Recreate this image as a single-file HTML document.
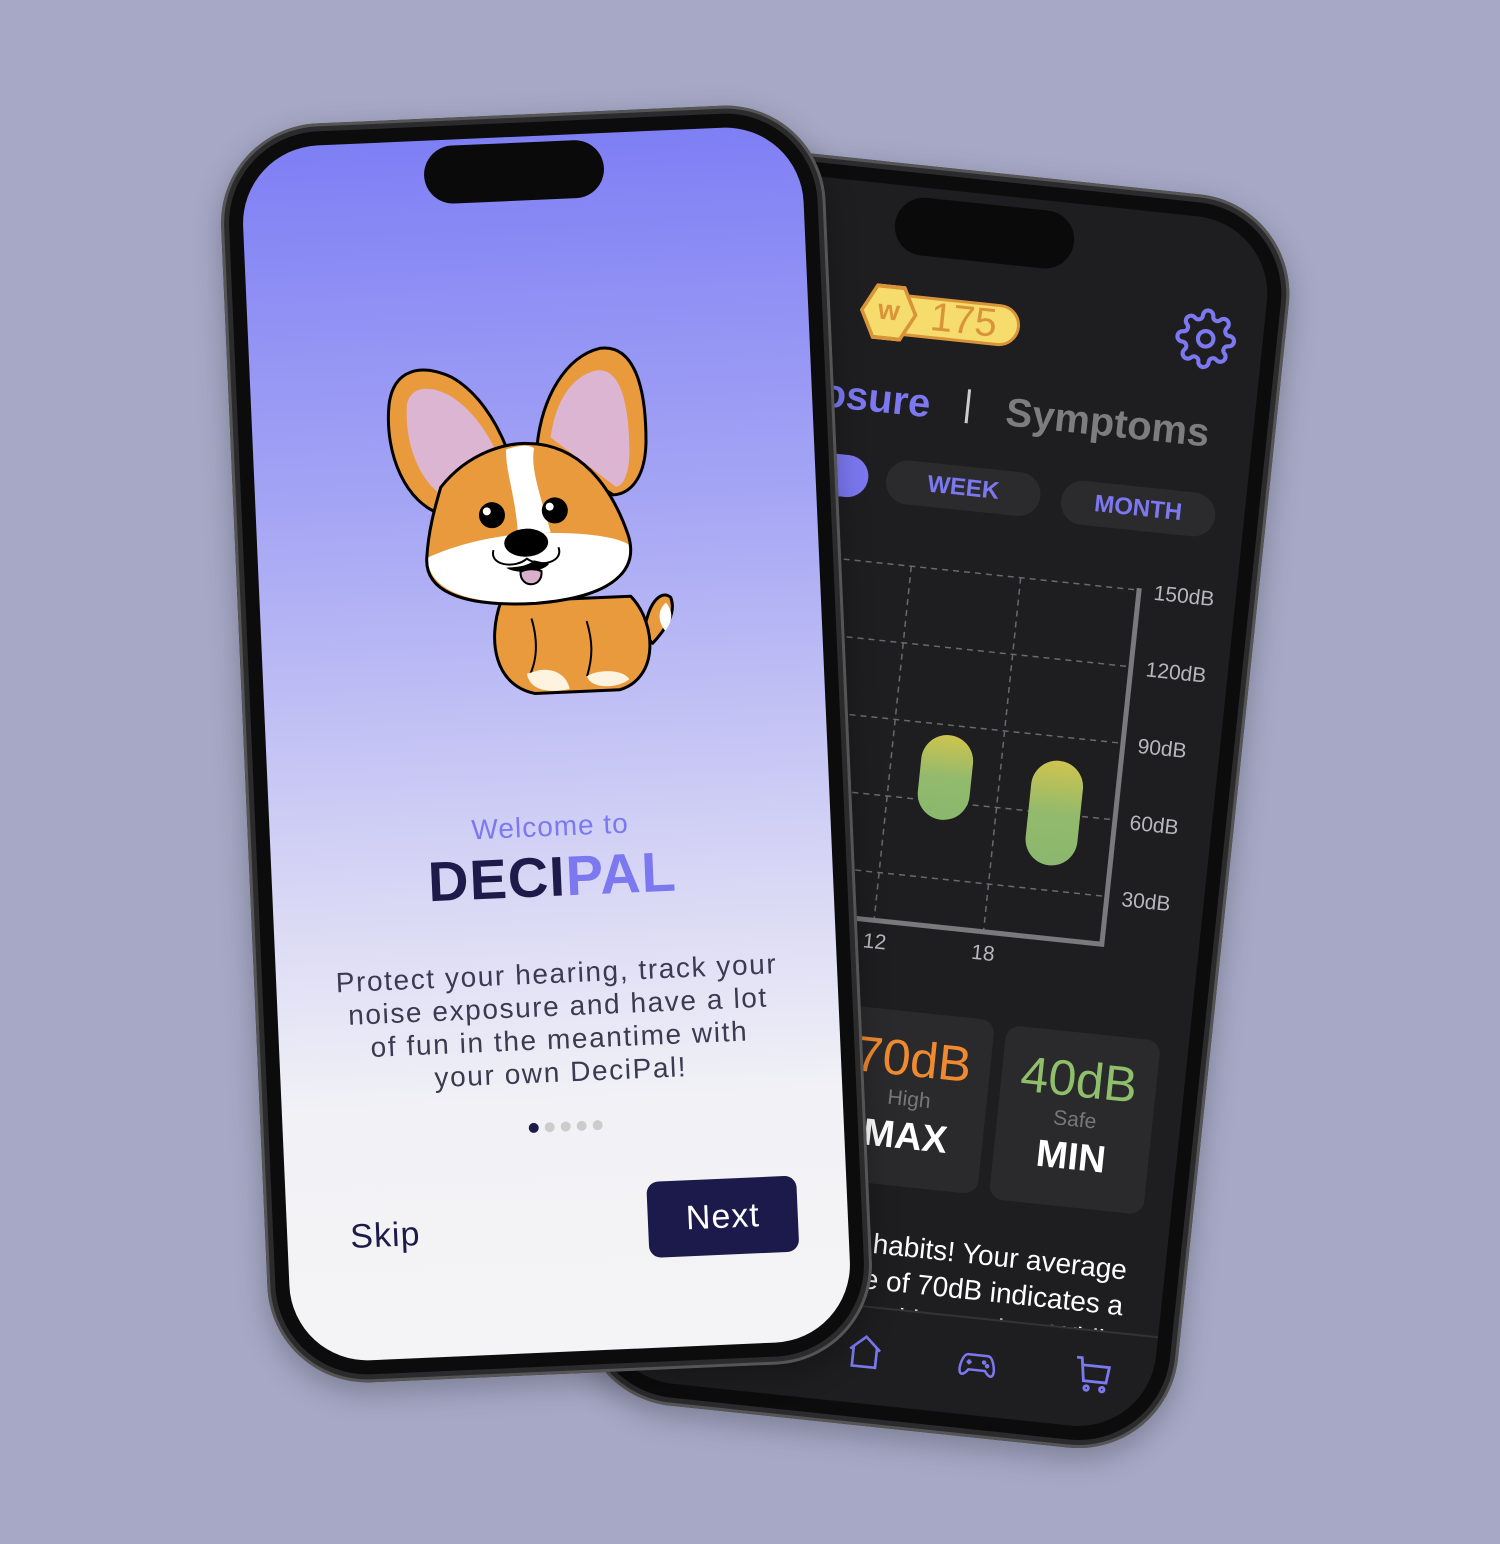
<!DOCTYPE html>
<html><head><meta charset="utf-8"><style>
*{margin:0;padding:0;box-sizing:border-box}
body{width:1500px;height:1544px;background:#a6a8c6;position:relative;overflow:hidden;font-family:"Liberation Sans",sans-serif}
.phone{position:absolute;width:600px;height:1260px;border-radius:100px;background:#2b2b2d;box-shadow:0 0 0 3px #555 inset,0 10px 30px rgba(0,0,0,.25)}
.bezel{position:absolute;left:8px;top:8px;right:8px;bottom:8px;border-radius:92px;background:#0c0c0c}
.screen{position:absolute;left:22px;top:22px;right:22px;bottom:22px;border-radius:78px;overflow:hidden}
.island{position:absolute;width:180px;height:58px;border-radius:29px;background:#0a0a0a}
.abs{position:absolute}
</style></head><body>

<!-- back phone -->
<div class="phone" style="left:635px;top:170px;transform:rotate(6deg)">
 <div class="bezel"></div>
 <div class="screen" style="background:#1e1d1f">
  <div style="position:absolute;left:-22px;top:-22px;width:600px;height:1260px">
   <div class="island" style="left:200px;top:32px"></div>
   <div class="abs" style="left:200px;top:130px;width:135px;height:42px;border-radius:21px;background:#f6dc6c;border:3px solid #d9943a"></div>
   <div class="abs" style="left:174px;top:122px;width:58px;height:56px;background:#d9943a;clip-path:polygon(25% 0,75% 0,100% 50%,75% 100%,25% 100%,0 50%)"></div>
   <div class="abs" style="left:178px;top:126px;width:50px;height:48px;background:#f6dc6c;clip-path:polygon(25% 0,75% 0,100% 50%,75% 100%,25% 100%,0 50%);color:#d9943a;font-weight:bold;font-size:28px;text-align:center;line-height:44px">w</div>
   <div class="abs" style="left:245px;top:128px;font-size:40px;color:#d9943a">175</div>
   <svg class="abs" style="left:490px;top:112px" width="62" height="62" viewBox="0 0 24 24" fill="none" stroke="#7b78f0" stroke-width="1.6"><circle cx="12" cy="12" r="3"/><path d="M19.4 15a1.65 1.65 0 0 0 .33 1.820l.06.06a2 2 0 1 1-2.830 2.830l-.06-.06a1.65 1.65 0 0 0-1.820-.33 1.650 1.650 0 0 0-1 1.510V21a2 2 0 1 1-4 0v-.09A1.65 1.65 0 0 0 9 19.4a1.65 1.65 0 0 0-1.820.33l-.06.06a2 2 0 1 1-2.830-2.830l.06-.06A1.65 1.65 0 0 0 4.68 15a1.65 1.65 0 0 0-1.510-1H3a2 2 0 1 1 0-4h.09A1.65 1.65 0 0 0 4.6 9a1.65 1.65 0 0 0-.33-1.820l-.06-.06a2 2 0 1 1 2.830-2.830l.06.06A1.65 1.65 0 0 0 9 4.68a1.65 1.65 0 0 0 1-1.510V3a2 2 0 1 1 4 0v.09a1.65 1.65 0 0 0 1 1.510 1.65 1.65 0 0 0 1.820-.33l.06-.06a2 2 0 1 1 2.830 2.830l-.06.06A1.65 1.65 0 0 0 19.4 9a1.65 1.65 0 0 0 1.510 1H21a2 2 0 1 1 0 4h-.09a1.65 1.65 0 0 0-1.510 1z"/></svg>
   <div class="abs" style="right:346px;top:215px;font-size:40px;font-weight:bold;color:#7b78f0">Exposure</div>
   <div class="abs" style="left:290px;top:218px;width:3px;height:34px;background:#ccc"></div>
   <div class="abs" style="left:330px;top:215px;font-size:40px;font-weight:bold;color:#7d7d80">Symptoms</div>
   <div class="abs" style="left:60px;top:296px;width:140px;height:42px;border-radius:21px;background:#7b78f0"></div>
   <div class="abs" style="left:218px;top:295px;width:155px;height:44px;border-radius:22px;background:#2b2b2d;color:#7b78f0;font-weight:bold;font-size:24px;text-align:center;line-height:44px">WEEK</div>
   <div class="abs" style="left:394px;top:297px;width:155px;height:44px;border-radius:22px;background:#2b2b2d;color:#7b78f0;font-weight:bold;font-size:24px;text-align:center;line-height:44px">MONTH</div>
   <svg class="abs" style="left:0;top:380px" width="600" height="420">
    <g stroke="#6a6a6e" stroke-width="1.5" stroke-dasharray="6 5" fill="none">
     <line x1="30" y1="20" x2="481" y2="20"/><line x1="30" y1="97" x2="481" y2="97"/><line x1="30" y1="174" x2="481" y2="174"/><line x1="30" y1="251" x2="481" y2="251"/><line x1="30" y1="328" x2="481" y2="328"/>
     <line x1="142" y1="20" x2="142" y2="376"/><line x1="252" y1="20" x2="252" y2="376"/><line x1="362" y1="20" x2="362" y2="376"/>
    </g>
    <path d="M481 18 V376 H30" stroke="#7a7a7e" stroke-width="5" fill="none"/>
    <defs><linearGradient id="g" x1="0" y1="0" x2="0" y2="1"><stop offset="0" stop-color="#cfc44e"/><stop offset=".5" stop-color="#93ba6c"/><stop offset="1" stop-color="#8ab86e"/></linearGradient></defs>
    <rect x="282" y="184" width="52" height="85" rx="26" fill="url(#g)"/>
    <rect x="394" y="198" width="52" height="105" rx="26" fill="url(#g)"/>
    <g fill="#b8b8bc" font-size="21" font-family="Liberation Sans">
     <text x="496" y="28">150dB</text><text x="496" y="105">120dB</text><text x="496" y="182">90dB</text><text x="496" y="259">60dB</text><text x="496" y="336">30dB</text>
     <text x="243" y="404">12</text><text x="352" y="404">18</text>
    </g>
   </svg>
   <div class="abs" style="left:228px;top:843px;width:155px;height:175px;border-radius:14px;background:#2a2a2c;text-align:center">
    <div style="font-size:50px;color:#f08a30;margin-top:18px">70dB</div>
    <div style="font-size:21px;color:#777">High</div>
    <div style="font-size:38px;color:#fff;font-weight:bold;margin-top:4px">MAX</div>
   </div>
   <div class="abs" style="left:395px;top:846px;width:155px;height:175px;border-radius:14px;background:#2a2a2c;text-align:center">
    <div style="font-size:50px;color:#8fbf6a;margin-top:18px">40dB</div>
    <div style="font-size:21px;color:#777">Safe</div>
    <div style="font-size:38px;color:#fff;font-weight:bold;margin-top:4px">MIN</div>
   </div>
   <div class="abs" style="left:60px;top:1060px;width:510px;height:80px;overflow:hidden;color:#fff;font-size:28px;line-height:36px;text-align:right;padding-right:30px">
    Great listening habits! Your average<br>exposure of 70dB indicates a<br>healthy routine. While
   </div>
   <div class="abs" style="left:22px;top:1140px;width:556px;height:2px;background:#333"></div>
   <svg class="abs" style="left:268px;top:1166px" width="40" height="40" viewBox="0 0 24 24" fill="none" stroke="#7b78f0" stroke-width="1.6"><path d="M3 11 L12 3 L21 11 M5 9.5 V21 H19 V9.5"/></svg>
   <svg class="abs" style="left:380px;top:1166px" width="42" height="40" viewBox="0 0 24 24" fill="none" stroke="#7b78f0" stroke-width="1.5"><path d="M6 7 H18 C21 7 23 15 22 18 C21 20 19 19 17 16 H7 C5 19 3 20 2 18 C1 15 3 7 6 7Z"/><path d="M7 10 V13 M5.5 11.5 H8.5"/><circle cx="16" cy="11" r=".6"/><circle cx="18" cy="13" r=".6"/></svg>
   <svg class="abs" style="left:496px;top:1164px" width="42" height="42" viewBox="0 0 24 24" fill="none" stroke="#7b78f0" stroke-width="1.6"><path d="M2 3 H5 L7 16 H20 L21 7 H6"/><circle cx="9" cy="20" r="1.3"/><circle cx="18" cy="20" r="1.3"/></svg>
  </div>
 </div>
</div>

<!-- front phone -->
<div class="phone" style="left:244px;top:114px;width:605px;transform:rotate(-2.5deg)">
 <div class="bezel"></div>
 <div class="screen" style="background:linear-gradient(#7f7ff5 0%,#a5a5f5 30%,#d5d4f5 60%,#f2f2f6 80%,#f4f4f6 100%)">
  <div style="position:absolute;left:-22px;top:-22px;width:605px;height:1260px">
   <div class="island" style="left:205px;top:28px"></div>
   <svg class="abs" style="left:148px;top:224px" width="310" height="370" viewBox="0 0 310 370">
    <g stroke="#000" stroke-width="3" stroke-linejoin="round">
     <path d="M60 172 C25 160 5 110 12 60 C18 25 45 20 75 35 C100 50 118 80 128 110 Z" fill="#e89a3c"/>
     <path d="M158 108 C165 60 190 20 225 13 C258 10 270 50 267 110 C264 150 245 160 232 160 Z" fill="#e89a3c"/>
     <path d="M265 310 C280 295 290 280 285 265 C278 258 268 265 262 280 L255 300Z" fill="#e89a3c"/>
     <path d="M115 262 C100 300 105 345 145 355 L230 355 C270 345 270 290 245 262 Z" fill="#e89a3c"/>
    </g>
    <path d="M70 158 C40 145 25 100 30 60 C35 42 55 42 75 55 C95 70 108 90 117 112 Z" fill="#dcb5d3"/>
    <path d="M172 100 C178 65 195 40 220 35 C245 32 252 70 250 120 C248 145 240 152 235 152 Z" fill="#dcb5d3"/>
    <path d="M60 145 C90 110 130 103 150 105 C200 108 230 150 245 200 C255 235 230 262 150 265 C70 266 40 245 43 215 C46 185 55 160 60 145Z" fill="#e89a3c"/>
    <path d="M43 215 C80 200 120 195 150 195 C190 195 230 200 245 210 C250 245 225 262 150 264 C75 264 45 245 43 215Z" fill="#fff"/>
    <path d="M127 110 C140 106 150 106 155 110 C150 130 160 160 168 195 L135 195 C135 160 125 130 127 110Z" fill="#fff"/>
    <path d="M43 215 C46 185 55 160 60 145 C90 110 130 103 150 105 C200 108 230 150 245 200 C255 235 230 262 150 265 C70 266 40 245 43 215Z" fill="none" stroke="#000" stroke-width="3"/>
    <circle cx="110" cy="175" r="13"/><circle cx="173" cy="173" r="13"/>
    <circle cx="105" cy="171" r="4" fill="#fff"/><circle cx="168" cy="169" r="4" fill="#fff"/>
    <ellipse cx="143" cy="204" rx="22" ry="14"/>
    <path d="M110 210 C105 225 130 230 143 220 C156 230 180 225 175 210" fill="none" stroke="#000" stroke-width="2"/>
    <path d="M122 228 C130 235 158 235 165 226 L150 222 C143 228 130 228 122 228Z" fill="#000"/>
    <path d="M136 233 C135 250 158 250 157 233 C150 230 142 230 136 233Z" fill="#d8b0cc" stroke="#000" stroke-width="2"/>
    <path d="M145 280 C150 300 150 320 140 338 M200 285 C205 305 205 320 198 340" fill="none" stroke="#000" stroke-width="2"/>
    <path d="M138 335 C140 350 155 356 180 352 C178 338 165 330 150 332Z" fill="#fdf3df"/>
    <path d="M198 340 C200 352 225 355 240 345 C235 335 210 333 198 340Z" fill="#fdf3df"/>
    <path d="M280 270 C288 280 285 290 278 298 C272 290 270 278 280 270Z" fill="#fff"/>
   </svg>
   <div class="abs" style="left:0;width:605px;top:697px;text-align:center;font-size:28px;color:#7b78f0;letter-spacing:1px">Welcome to</div>
   <div class="abs" style="left:0;width:605px;top:730px;text-align:center;font-size:56px;font-weight:bold;color:#1e1b4b;letter-spacing:1px">DECI<span style="color:#7b78f0">PAL</span></div>
   <div class="abs" style="left:40px;width:525px;top:843px;text-align:center;font-size:28px;line-height:33px;color:#3a3a50;letter-spacing:1.6px">Protect your hearing, track your<br>noise exposure and have a lot<br>of fun in the meantime with<br>your own DeciPal!</div>
   <div class="abs" style="left:268px;top:1008px;width:10px;height:10px;border-radius:5px;background:#1e1b4b"></div>
   <div class="abs" style="left:284px;top:1008px;width:10px;height:10px;border-radius:5px;background:#ccc"></div>
   <div class="abs" style="left:300px;top:1008px;width:10px;height:10px;border-radius:5px;background:#ccc"></div>
   <div class="abs" style="left:316px;top:1008px;width:10px;height:10px;border-radius:5px;background:#ccc"></div>
   <div class="abs" style="left:332px;top:1008px;width:10px;height:10px;border-radius:5px;background:#ccc"></div>
   <div class="abs" style="left:85px;top:1095px;font-size:34px;color:#1e1b4b;letter-spacing:1px">Skip</div>
   <div class="abs" style="left:383px;top:1072px;width:150px;height:76px;border-radius:12px;background:#1c1a4a;color:#fff;font-size:34px;text-align:center;line-height:76px;letter-spacing:1px">Next</div>
  </div>
 </div>
</div>
</body></html>
